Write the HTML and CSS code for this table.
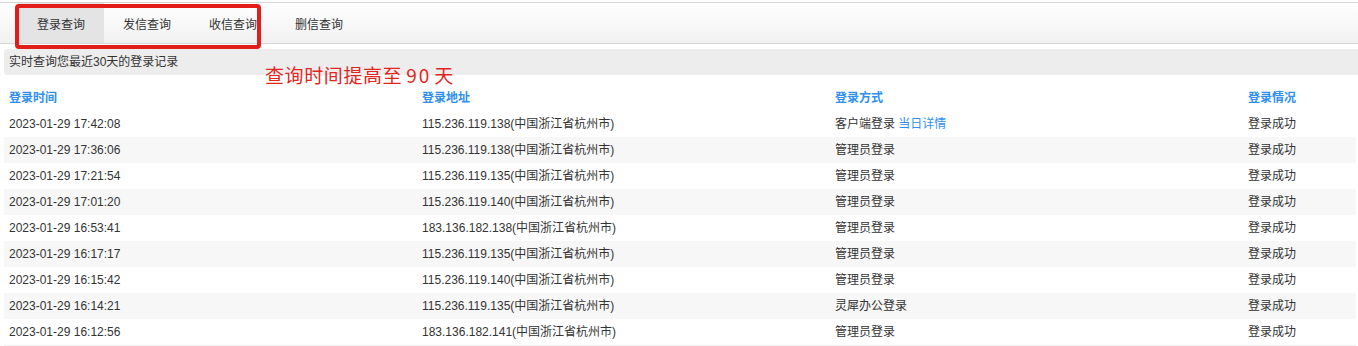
FILE: index.html
```html
<!DOCTYPE html>
<html lang="zh-CN">
<head>
<meta charset="utf-8">
<title>登录查询</title>
<link rel="stylesheet" href="styles.css">
</head>
<body>
<div class="page">
  <div class="tabbar">
    <div class="tab active">登录查询</div>
    <div class="tab">发信查询</div>
    <div class="tab">收信查询</div>
    <div class="tab">删信查询</div>
  </div>
  <div class="info">实时查询您最近30天的登录记录</div>
  <div class="table">
    <div class="row head">
      <div class="cell">登录时间</div>
      <div class="cell">登录地址</div>
      <div class="cell">登录方式</div>
      <div class="cell">登录情况</div>
    </div>
    <div class="row">
      <div class="cell">2023-01-29 17:42:08</div>
      <div class="cell">115.236.119.138(中国浙江省杭州市)</div>
      <div class="cell">客户端登录 <span class="link">当日详情</span></div>
      <div class="cell">登录成功</div>
    </div>
    <div class="row">
      <div class="cell">2023-01-29 17:36:06</div>
      <div class="cell">115.236.119.138(中国浙江省杭州市)</div>
      <div class="cell">管理员登录</div>
      <div class="cell">登录成功</div>
    </div>
    <div class="row">
      <div class="cell">2023-01-29 17:21:54</div>
      <div class="cell">115.236.119.135(中国浙江省杭州市)</div>
      <div class="cell">管理员登录</div>
      <div class="cell">登录成功</div>
    </div>
    <div class="row">
      <div class="cell">2023-01-29 17:01:20</div>
      <div class="cell">115.236.119.140(中国浙江省杭州市)</div>
      <div class="cell">管理员登录</div>
      <div class="cell">登录成功</div>
    </div>
    <div class="row">
      <div class="cell">2023-01-29 16:53:41</div>
      <div class="cell">183.136.182.138(中国浙江省杭州市)</div>
      <div class="cell">管理员登录</div>
      <div class="cell">登录成功</div>
    </div>
    <div class="row">
      <div class="cell">2023-01-29 16:17:17</div>
      <div class="cell">115.236.119.135(中国浙江省杭州市)</div>
      <div class="cell">管理员登录</div>
      <div class="cell">登录成功</div>
    </div>
    <div class="row">
      <div class="cell">2023-01-29 16:15:42</div>
      <div class="cell">115.236.119.140(中国浙江省杭州市)</div>
      <div class="cell">管理员登录</div>
      <div class="cell">登录成功</div>
    </div>
    <div class="row">
      <div class="cell">2023-01-29 16:14:21</div>
      <div class="cell">115.236.119.135(中国浙江省杭州市)</div>
      <div class="cell">灵犀办公登录</div>
      <div class="cell">登录成功</div>
    </div>
    <div class="row">
      <div class="cell">2023-01-29 16:12:56</div>
      <div class="cell">183.136.182.141(中国浙江省杭州市)</div>
      <div class="cell">管理员登录</div>
      <div class="cell">登录成功</div>
    </div>
  </div>
  <div class="mark-box"></div>
  <div class="mark-text">查询时间提高至<span class="num">90</span>天</div>
</div>
</body>
</html>
```

FILE: styles.css
```css
html, body {
  margin: 0;
  padding: 0;
  background: #ffffff;
}
body {
  font-family: "Liberation Sans", "Noto Sans CJK SC", sans-serif;
  font-size: 12px;
  color: #333333;
}
.page {
  position: relative;
  padding-top: 2px;
}
.tabbar {
  display: flex;
  height: 40px;
  padding-left: 18px;
  border-top: 1px solid #d6d6d6;
  border-bottom: 1px solid #d6d6d6;
  background: linear-gradient(#ffffff, #f1f1f1);
}
.tab {
  width: 86px;
  display: flex;
  align-items: center;
  justify-content: center;
  font-size: 12px;
  color: #333333;
}
.tab.active {
  background: #e4e4e4;
}
.info {
  margin: 5px 0 0 4px;
  height: 26px;
  line-height: 27px;
  padding-left: 5px;
  background: #ededed;
  border-radius: 4px 0 0 4px;
}
.table {
  margin: 10px 2px 0 4px;
}
.row {
  display: grid;
  grid-template-columns: 413px 413px 413px 1fr;
  height: 26px;
  line-height: 26px;
}
.row:nth-child(odd):not(.head) {
  background: #f7f7f7;
}
.row:last-child {
  border-bottom: 1px solid #efefef;
}
.cell {
  padding-left: 5px;
  white-space: nowrap;
}
.head .cell {
  color: #2f8ff0;
  font-weight: bold;
}
.link {
  color: #2f8ff0;
}
.mark-box {
  position: absolute;
  left: 15px;
  top: 4px;
  width: 238px;
  height: 37px;
  border: 4px solid #e21d1a;
  border-radius: 4px;
}
.mark-text {
  position: absolute;
  left: 265px;
  top: 63px;
  font-family: "Noto Sans CJK SC", sans-serif;
  font-size: 19px;
  line-height: 24px;
  color: #e2261e;
  letter-spacing: 0.6px;
}
.mark-text .num {
  padding: 0 3px 0 4px;
  letter-spacing: 2px;
}
```
